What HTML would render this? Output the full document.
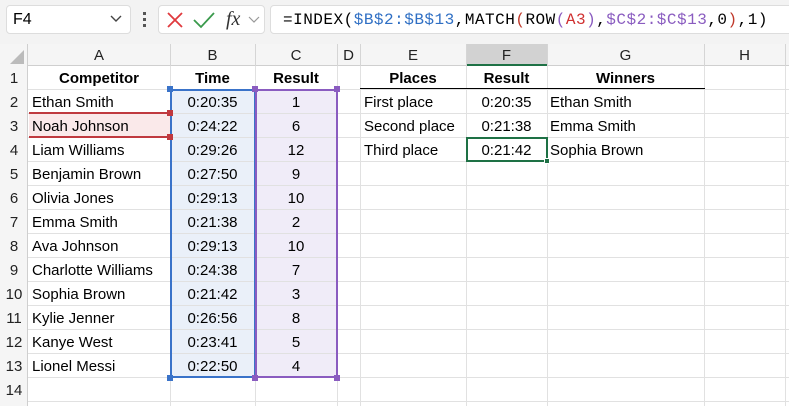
<!DOCTYPE html><html><head><style>
body{margin:0;width:789px;height:406px;position:relative;overflow:hidden;background:#fff;font-family:"Liberation Sans",sans-serif;}
.a{position:absolute;box-sizing:border-box;}
.t{position:absolute;font-size:15px;line-height:24px;color:#000;white-space:nowrap;margin-top:2px;}
.h{position:absolute;font-size:15px;line-height:22px;color:#222;text-align:center;top:45px;}
.r{position:absolute;left:0;width:28px;text-align:center;font-size:15px;line-height:24px;color:#222;margin-top:2px;}
.v{position:absolute;width:1px;background:#e1e1e1;top:66px;height:340px;}
.hl{position:absolute;height:1px;background:#e1e1e1;left:28px;width:761px;}
</style></head><body>
<div class="a" style="left:0;top:0;width:789px;height:44px;background:#f3f3f3"></div>
<div class="a" style="left:6px;top:5px;width:125px;height:29px;background:#fff;border:1px solid #ddd;border-radius:4px"></div>
<div class="t" style="left:13px;top:6px;font-size:16px">F4</div>
<svg class="a" style="left:110px;top:15px" width="12" height="8"><path d="M1 1 L6 6 L11 1" stroke="#444" stroke-width="1.4" fill="none"/></svg>
<div class="a" style="left:143px;top:12px;width:3px;height:3px;background:#555"></div>
<div class="a" style="left:143px;top:18px;width:3px;height:3px;background:#555"></div>
<div class="a" style="left:143px;top:24px;width:3px;height:3px;background:#555"></div>
<div class="a" style="left:158px;top:5px;width:107px;height:29px;background:#fff;border:1px solid #ddd;border-radius:4px"></div>
<svg class="a" style="left:165px;top:10px" width="20" height="20"><path d="M3 3 L17 17 M17 3 L3 17" stroke="#e0393e" stroke-width="1.8"/></svg>
<svg class="a" style="left:192px;top:10px" width="24" height="20"><path d="M2 10 L9 17 L22 3" stroke="#3a9a4c" stroke-width="1.8" fill="none"/></svg>
<div class="t" style="left:226px;top:5px;font-family:'Liberation Serif',serif;font-style:italic;font-size:20px;color:#333">fx</div>
<svg class="a" style="left:248px;top:16px" width="12" height="8"><path d="M1 1 L6 6 L11 1" stroke="#999" stroke-width="1.2" fill="none"/></svg>
<div class="a" style="left:270px;top:5px;width:530px;height:29px;background:#fff;border:1px solid #ddd;border-radius:4px"></div>
<div class="t" style="left:283px;top:6px;font-family:'Liberation Mono',monospace;font-size:16px;letter-spacing:0.5px">=INDEX(<span style="color:#2f6fc4">$B$2:$B$13</span>,MATCH<span style="color:#c0392b">(</span>ROW<span style="color:#8a5cc0">(</span><span style="color:#d03030">A3</span><span style="color:#8a5cc0">)</span>,<span style="color:#8a5cc0">$C$2:$C$13</span>,0<span style="color:#c0392b">)</span>,1)</div>
<div class="a" style="left:0;top:44px;width:789px;height:22px;background:#f5f5f5;border-bottom:1px solid #cfcfcf"></div>
<div class="a" style="left:0;top:44px;width:28px;height:362px;background:#f5f5f5;border-right:1px solid #cfcfcf"></div>
<svg class="a" style="left:9px;top:49px" width="16" height="16"><path d="M15 1 L15 15 L1 15 Z" fill="#bbb"/></svg>
<div class="a" style="left:466px;top:44px;width:81px;height:22px;background:#d2d2d2;border-bottom:2px solid #1e7145"></div>
<div class="h" style="left:28px;width:142px">A</div><div class="h" style="left:170px;width:85px">B</div><div class="h" style="left:255px;width:82px">C</div><div class="h" style="left:337px;width:23px">D</div><div class="h" style="left:360px;width:106px">E</div><div class="h" style="left:466px;width:81px">F</div><div class="h" style="left:547px;width:157px">G</div><div class="h" style="left:704px;width:81px">H</div>
<div class="a" style="left:170px;top:44px;width:1px;height:22px;background:#d5d5d5"></div><div class="a" style="left:255px;top:44px;width:1px;height:22px;background:#d5d5d5"></div><div class="a" style="left:337px;top:44px;width:1px;height:22px;background:#d5d5d5"></div><div class="a" style="left:360px;top:44px;width:1px;height:22px;background:#d5d5d5"></div><div class="a" style="left:466px;top:44px;width:1px;height:22px;background:#d5d5d5"></div><div class="a" style="left:547px;top:44px;width:1px;height:22px;background:#d5d5d5"></div><div class="a" style="left:704px;top:44px;width:1px;height:22px;background:#d5d5d5"></div><div class="a" style="left:785px;top:44px;width:1px;height:22px;background:#d5d5d5"></div>
<div class="a" style="left:171px;top:90px;width:84px;height:288px;background:#eaf0f9"></div>
<div class="a" style="left:256px;top:90px;width:81px;height:288px;background:#f0ecf8"></div>
<div class="a" style="left:29px;top:114px;width:141px;height:24px;background:#fae9ea"></div>
<div class="v" style="left:170px"></div><div class="v" style="left:255px"></div><div class="v" style="left:337px"></div><div class="v" style="left:360px"></div><div class="v" style="left:466px"></div><div class="v" style="left:547px"></div><div class="v" style="left:704px"></div><div class="v" style="left:785px"></div>
<div class="hl" style="top:89px"></div><div class="hl" style="top:113px"></div><div class="hl" style="top:137px"></div><div class="hl" style="top:161px"></div><div class="hl" style="top:185px"></div><div class="hl" style="top:209px"></div><div class="hl" style="top:233px"></div><div class="hl" style="top:257px"></div><div class="hl" style="top:281px"></div><div class="hl" style="top:305px"></div><div class="hl" style="top:329px"></div><div class="hl" style="top:353px"></div><div class="hl" style="top:377px"></div><div class="hl" style="top:401px"></div>
<div class="a" style="left:360px;top:88px;width:345px;height:1px;background:#000"></div>
<div class="r" style="top:65px">1</div><div class="r" style="top:89px">2</div><div class="r" style="top:113px">3</div><div class="r" style="top:137px">4</div><div class="r" style="top:161px">5</div><div class="r" style="top:185px">6</div><div class="r" style="top:209px">7</div><div class="r" style="top:233px">8</div><div class="r" style="top:257px">9</div><div class="r" style="top:281px">10</div><div class="r" style="top:305px">11</div><div class="r" style="top:329px">12</div><div class="r" style="top:353px">13</div><div class="r" style="top:377px">14</div>
<div class="a" style="left:170px;top:89px;width:86px;height:289px;border:2px solid #3a73c9"></div>
<div class="a" style="left:255px;top:89px;width:83px;height:289px;border:2px solid #8a5cc0"></div>
<div class="a" style="left:29px;top:112px;width:142px;height:26px;border-top:2px solid #c0393f;border-bottom:2px solid #c0393f"></div>
<div class="a" style="left:167px;top:86px;width:6px;height:6px;background:#3a73c9"></div><div class="a" style="left:167px;top:375px;width:6px;height:6px;background:#3a73c9"></div>
<div class="a" style="left:252px;top:86px;width:6px;height:6px;background:#8a5cc0"></div><div class="a" style="left:334px;top:86px;width:6px;height:6px;background:#8a5cc0"></div><div class="a" style="left:252px;top:375px;width:6px;height:6px;background:#8a5cc0"></div><div class="a" style="left:334px;top:375px;width:6px;height:6px;background:#8a5cc0"></div>
<div class="a" style="left:167px;top:110px;width:6px;height:6px;background:#c0393f"></div><div class="a" style="left:167px;top:134px;width:6px;height:6px;background:#c0393f"></div>
<div class="a" style="left:466px;top:137px;width:82px;height:25px;border:2px solid #1e7145"></div>
<div class="a" style="left:544px;top:158px;width:6px;height:6px;background:#1e7145;border:1px solid #fff"></div>
<div class="t" style="left:28px;width:142px;text-align:center;top:65px;font-weight:bold">Competitor</div>
<div class="t" style="left:170px;width:85px;text-align:center;top:65px;font-weight:bold">Time</div>
<div class="t" style="left:255px;width:82px;text-align:center;top:65px;font-weight:bold">Result</div>
<div class="t" style="left:360px;width:106px;text-align:center;top:65px;font-weight:bold">Places</div>
<div class="t" style="left:466px;width:81px;text-align:center;top:65px;font-weight:bold">Result</div>
<div class="t" style="left:547px;width:157px;text-align:center;top:65px;font-weight:bold">Winners</div>
<div class="t" style="left:32px;top:89px">Ethan Smith</div><div class="t" style="left:32px;top:113px">Noah Johnson</div><div class="t" style="left:32px;top:137px">Liam Williams</div><div class="t" style="left:32px;top:161px">Benjamin Brown</div><div class="t" style="left:32px;top:185px">Olivia Jones</div><div class="t" style="left:32px;top:209px">Emma Smith</div><div class="t" style="left:32px;top:233px">Ava Johnson</div><div class="t" style="left:32px;top:257px">Charlotte Williams</div><div class="t" style="left:32px;top:281px">Sophia Brown</div><div class="t" style="left:32px;top:305px">Kylie Jenner</div><div class="t" style="left:32px;top:329px">Kanye West</div><div class="t" style="left:32px;top:353px">Lionel Messi</div>
<div class="t" style="left:170px;width:85px;text-align:center;top:89px">0:20:35</div><div class="t" style="left:170px;width:85px;text-align:center;top:113px">0:24:22</div><div class="t" style="left:170px;width:85px;text-align:center;top:137px">0:29:26</div><div class="t" style="left:170px;width:85px;text-align:center;top:161px">0:27:50</div><div class="t" style="left:170px;width:85px;text-align:center;top:185px">0:29:13</div><div class="t" style="left:170px;width:85px;text-align:center;top:209px">0:21:38</div><div class="t" style="left:170px;width:85px;text-align:center;top:233px">0:29:13</div><div class="t" style="left:170px;width:85px;text-align:center;top:257px">0:24:38</div><div class="t" style="left:170px;width:85px;text-align:center;top:281px">0:21:42</div><div class="t" style="left:170px;width:85px;text-align:center;top:305px">0:26:56</div><div class="t" style="left:170px;width:85px;text-align:center;top:329px">0:23:41</div><div class="t" style="left:170px;width:85px;text-align:center;top:353px">0:22:50</div>
<div class="t" style="left:255px;width:82px;text-align:center;top:89px">1</div><div class="t" style="left:255px;width:82px;text-align:center;top:113px">6</div><div class="t" style="left:255px;width:82px;text-align:center;top:137px">12</div><div class="t" style="left:255px;width:82px;text-align:center;top:161px">9</div><div class="t" style="left:255px;width:82px;text-align:center;top:185px">10</div><div class="t" style="left:255px;width:82px;text-align:center;top:209px">2</div><div class="t" style="left:255px;width:82px;text-align:center;top:233px">10</div><div class="t" style="left:255px;width:82px;text-align:center;top:257px">7</div><div class="t" style="left:255px;width:82px;text-align:center;top:281px">3</div><div class="t" style="left:255px;width:82px;text-align:center;top:305px">8</div><div class="t" style="left:255px;width:82px;text-align:center;top:329px">5</div><div class="t" style="left:255px;width:82px;text-align:center;top:353px">4</div>
<div class="t" style="left:364px;top:89px">First place</div><div class="t" style="left:364px;top:113px">Second place</div><div class="t" style="left:364px;top:137px">Third place</div>
<div class="t" style="left:466px;width:81px;text-align:center;top:89px">0:20:35</div><div class="t" style="left:466px;width:81px;text-align:center;top:113px">0:21:38</div><div class="t" style="left:466px;width:81px;text-align:center;top:137px">0:21:42</div>
<div class="t" style="left:550px;top:89px">Ethan Smith</div><div class="t" style="left:550px;top:113px">Emma Smith</div><div class="t" style="left:550px;top:137px">Sophia Brown</div>
</body></html>
